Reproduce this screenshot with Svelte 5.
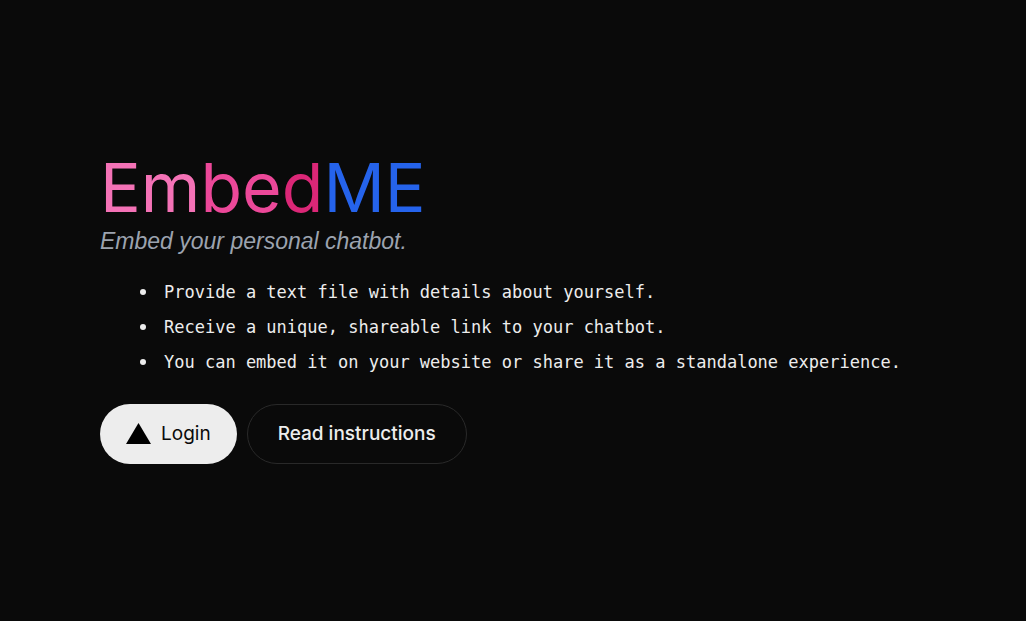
<script>
  const title = [
    { text: 'Em', tone: 'light' },
    { text: 'be', tone: 'mid' },
    { text: 'd', tone: 'deep' },
    { text: 'ME', tone: 'blue' }
  ];
  const steps = [
    'Provide a text file with details about yourself.',
    'Receive a unique, shareable link to your chatbot.',
    'You can embed it on your website or share it as a standalone experience.'
  ];
</script>

<svelte:head><title>EmbedME</title></svelte:head>

<main>
  <div class="content">
    <header>
      <h1>{#each title as part}<span class={part.tone}>{part.text}</span>{/each}</h1>
      <p>Embed your personal chatbot.</p>
    </header>
    <ul>
      {#each steps as step}
        <li>{step}</li>
      {/each}
    </ul>
    <div class="actions">
      <button type="button" class="login">
        <svg viewBox="0 0 25 22" width="25" height="22" aria-hidden="true"><path d="M12.5 0 25 21H0Z" fill="#000" /></svg>
        Login
      </button>
      <a class="secondary" href="#instructions">Read instructions</a>
    </div>
  </div>
</main>

<style>
  :global(body) { margin: 0; background: #0a0a0a; }
  main {
    box-sizing: border-box;
    min-height: 100vh;
    padding: 32px 64px 32px 100px;
    display: flex;
    align-items: center;
    color: #ededed;
    font-family: Inter, "Liberation Sans", sans-serif;
  }
  h1 { margin: 0 0 8px; font-size: 68px; line-height: 60px; font-weight: 400; }
  .light { color: #f472b6; }
  .mid { color: #ec4899; }
  .deep { color: #db2777; }
  .blue { color: #2563eb; }
  header p {
    margin: 0;
    font-family: "Liberation Sans", sans-serif;
    font-size: 23px;
    line-height: 32px;
    font-style: italic;
    color: #9ca3af;
  }
  ul {
    margin: 22px 0 28px;
    padding: 0 0 0 40px;
    list-style: none;
    display: flex;
    flex-direction: column;
    gap: 8px;
    font-family: "DejaVu Sans Mono", monospace;
    font-size: 17px;
    line-height: 27px;
  }
  li { display: flex; gap: 18px; }
  li::before {
    content: "";
    flex: none;
    width: 6px;
    height: 6px;
    margin-top: 10px;
    border-radius: 50%;
    background: #ededed;
  }
  .actions { display: flex; flex-wrap: wrap; gap: 10px; }
  .login, .secondary {
    box-sizing: border-box;
    height: 60px;
    display: flex;
    align-items: center;
    gap: 10px;
    border-radius: 30px;
    font-family: inherit;
    font-size: 19px;
    line-height: 24px;
  }
  .login { padding: 0 26px; border: 0; background: #ededed; color: #0a0a0a; }
  .secondary { padding: 0 30px; border: 1px solid #292929; color: #ededed; font-weight: 500; text-decoration: none; }
</style>
